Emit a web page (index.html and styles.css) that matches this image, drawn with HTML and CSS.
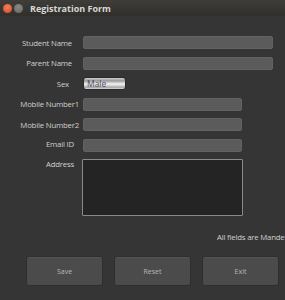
FILE: index.html
```html
<!DOCTYPE html>
<html lang="en">
<head>
  <meta charset="UTF-8" />
  <meta name="viewport" content="width=device-width, initial-scale=1.0" />
  <title>Registration Form</title>
  <link rel="stylesheet" href="styles.css">
</head>
<body>
  <div class="titlebar">
    <span class="win-btn close"></span>
    <span class="win-btn minimize"></span>
    <span class="title">Registration Form</span>
  </div>

  <form class="form">
    <label class="label" for="studentName">Student Name</label>
    <input class="field wide" type="text" id="studentName" />

    <label class="label" for="parentName">Parent Name</label>
    <input class="field wide" type="text" id="parentName" />

    <label class="label label-sex" for="sex">Sex</label>
    <div class="combo" id="sex">Male</div>

    <label class="label label-mobile" for="mobile1">Mobile Number1</label>
    <input class="field medium" type="text" id="mobile1" />

    <label class="label label-mobile" for="mobile2">Mobile Number2</label>
    <input class="field medium" type="text" id="mobile2" />

    <label class="label label-short" for="email">Email ID</label>
    <input class="field medium" type="text" id="email" />

    <label class="label label-short" for="address">Address</label>
    <textarea class="address" id="address"></textarea>
  </form>

  <div class="note">All fields are Mandetory</div>

  <div class="buttons">
    <button type="button" class="btn">Save</button>
    <button type="button" class="btn">Reset</button>
    <button type="button" class="btn">Exit</button>
  </div>
</body>
</html>
```

FILE: styles.css
```css
body {
  margin: 0;
  width: 285px;
  height: 300px;
  overflow: hidden;
  background-color: #353535;
  font-family: "Open Sans", "DejaVu Sans", sans-serif;
  color: #d6d6d6;
}

.titlebar {
  height: 16px;
  display: flex;
  align-items: center;
  padding-left: 3px;
  background: linear-gradient(#3e3d39, #302f2c);
}

.win-btn {
  width: 9px;
  height: 9px;
  border-radius: 50%;
  margin-right: 2px;
}

.close {
  background: radial-gradient(circle at 50% 35%, #f0825a, #d9481e);
}

.minimize {
  background: radial-gradient(circle at 50% 35%, #8a8985, #65645f);
}

.title {
  margin-left: 5px;
  font-size: 9px;
  font-weight: bold;
  color: #d8d8d2;
}

.form {
  display: grid;
  grid-template-columns: 83px auto;
  row-gap: 7.5px;
  padding-top: 20px;
  align-items: center;
  justify-items: start;
}

.label {
  justify-self: end;
  padding-right: 11px;
  font-size: 7.8px;
  letter-spacing: -0.2px;
  color: #d0d0d0;
}

.label-sex {
  padding-right: 14px;
}

.label-mobile {
  padding-right: 4px;
}

.label-short {
  padding-right: 9px;
  align-self: start;
}

.field {
  box-sizing: border-box;
  height: 13px;
  margin: 0;
  padding: 0;
  border: 1px solid #626262;
  border-radius: 2px;
  background-color: #5b5b5b;
}

.wide {
  width: 190px;
}

.medium {
  width: 159px;
}

.combo {
  box-sizing: border-box;
  width: 43px;
  height: 13px;
  padding-left: 3px;
  border: 1px solid #2a2a2a;
  border-radius: 3px;
  background: linear-gradient(#cfcfcf, #9a9a9a 25%, #f4f4f4 55%, #a8a8a8 85%, #dcdcdc);
  font-size: 8.5px;
  line-height: 11px;
  color: #4e4e5c;
}

.address {
  box-sizing: border-box;
  width: 161px;
  height: 57px;
  margin: 0 0 0 -1px;
  border: 1px solid #8a8a8a;
  border-radius: 1px;
  background-color: #242424;
  resize: none;
}

.note {
  margin-top: 16px;
  padding-left: 217px;
  white-space: nowrap;
  font-size: 7.8px;
  letter-spacing: -0.2px;
  color: #d0d0d0;
}

.buttons {
  display: flex;
  gap: 11px;
  margin-top: 14px;
  padding-left: 26px;
}

.btn {
  width: 77px;
  height: 30px;
  border: 1px solid #2e2e2e;
  border-radius: 3px;
  background-color: #4b4b4b;
  box-shadow: inset 0 1px 0 #555555;
  font-family: "Open Sans", "DejaVu Sans", sans-serif;
  font-size: 7px;
  color: #b8b8b8;
}
```
